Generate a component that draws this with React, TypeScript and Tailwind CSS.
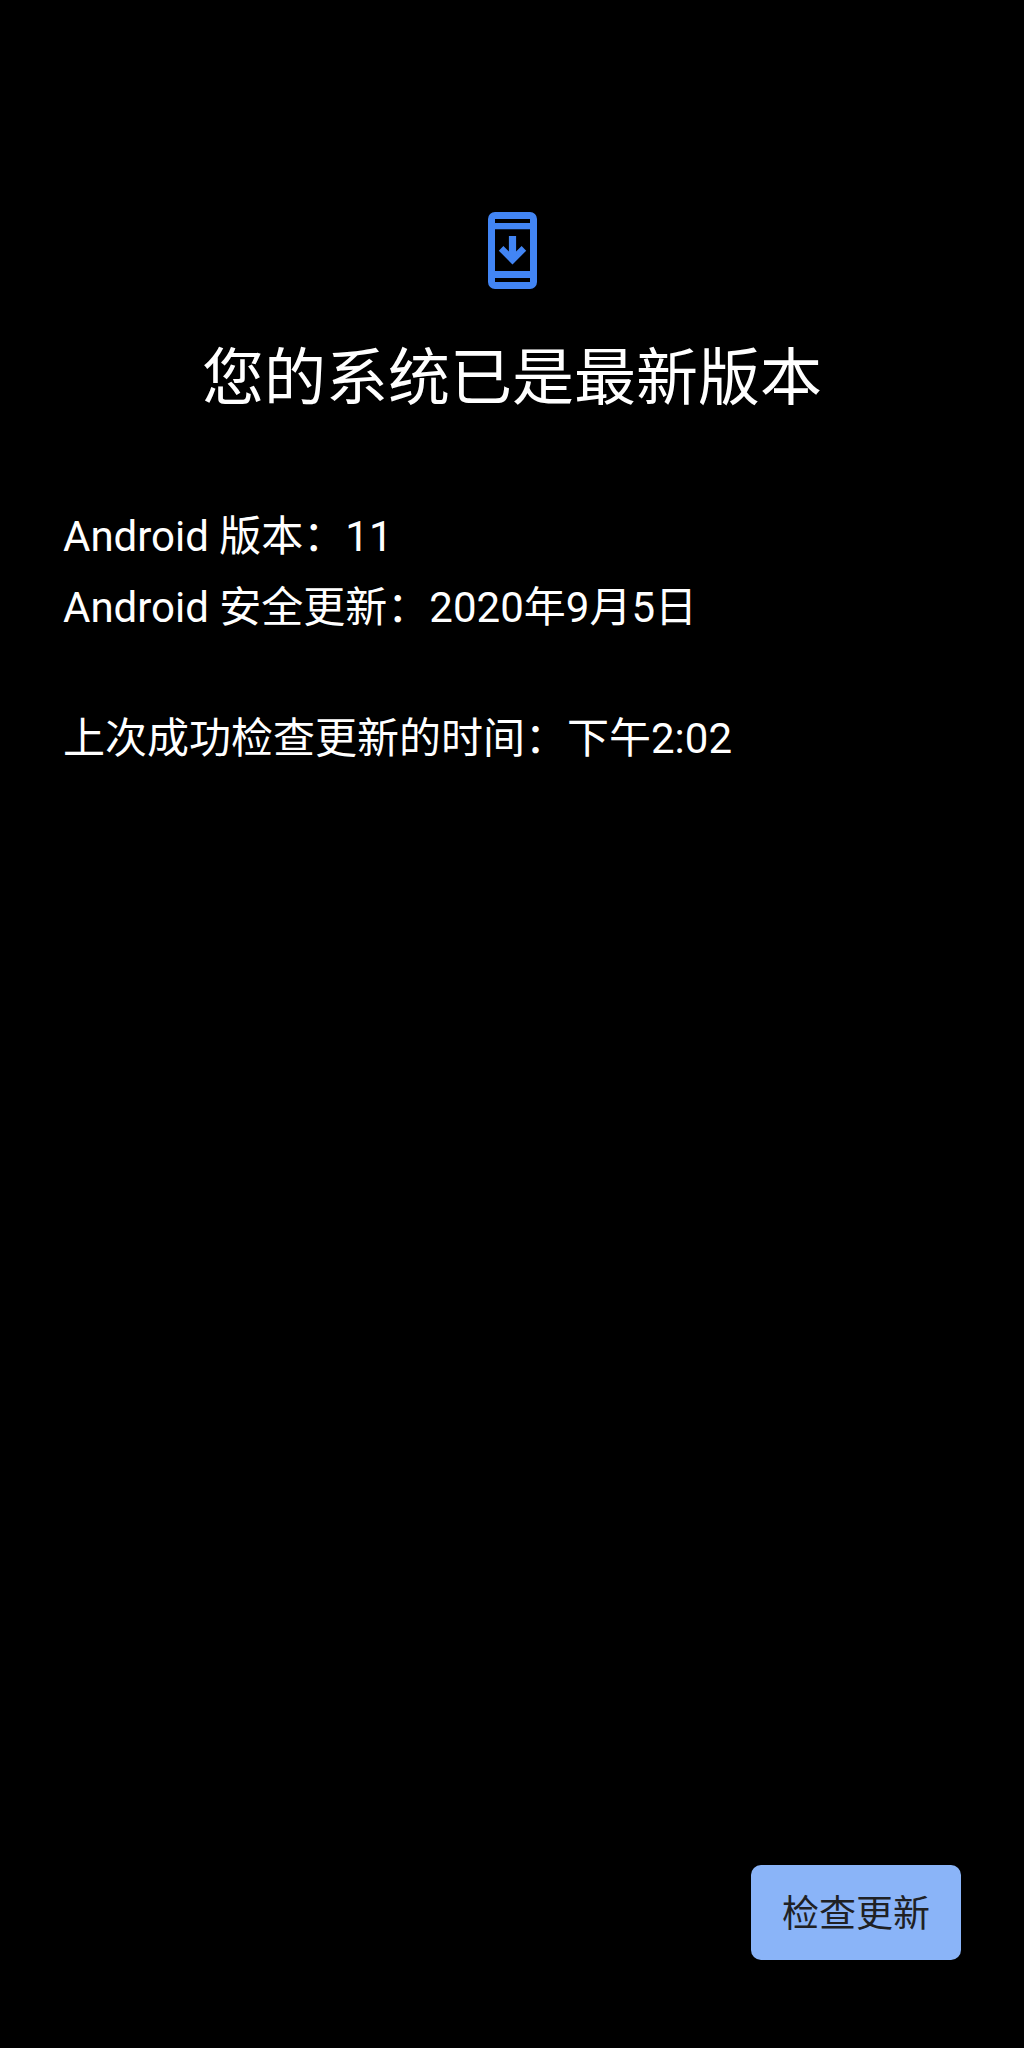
export default function App() {
  return (
    <main lang="zh-CN" className="flex min-h-screen flex-col bg-black px-[63px] pt-53 pb-22 font-['Roboto','Noto_Sans_CJK_SC',sans-serif] text-white">
      <svg viewBox="0 0 49 77" className="h-[77px] w-[49px] self-center" fill="#4285f4" aria-hidden="true">
        <path
          fillRule="evenodd"
          d="M7 0H42A7 7 0 0 1 49 7V70A7 7 0 0 1 42 77H7A7 7 0 0 1 0 70V7A7 7 0 0 1 7 0ZM7 7V11H42V7ZM7 17.3V59H42V17.3ZM7 66V70H42V66Z"
        />
        <path d="M20.9 24H28.1V39.6L33.6 34.1L38.2 38.7L24.5 52.4L10.8 38.7L15.4 34.1L20.9 39.6Z" />
      </svg>
      <h1 className="mt-11 text-center text-[62px] leading-[92px]">您的系统已是最新版本</h1>
      <div className="mt-19 text-[42px] leading-[71px]">
        <p>Android 版本：11</p>
        <p>Android 安全更新：2020年9月5日</p>
        <p className="mt-15">上次成功检查更新的时间：下午2:02</p>
      </div>
      <button type="button" className="mt-auto h-[95px] self-end rounded-[10px] bg-[#8ab4f8] px-[31px] pt-1 text-[37px] leading-none text-[#202124]">
        检查更新
      </button>
    </main>
  );
}
